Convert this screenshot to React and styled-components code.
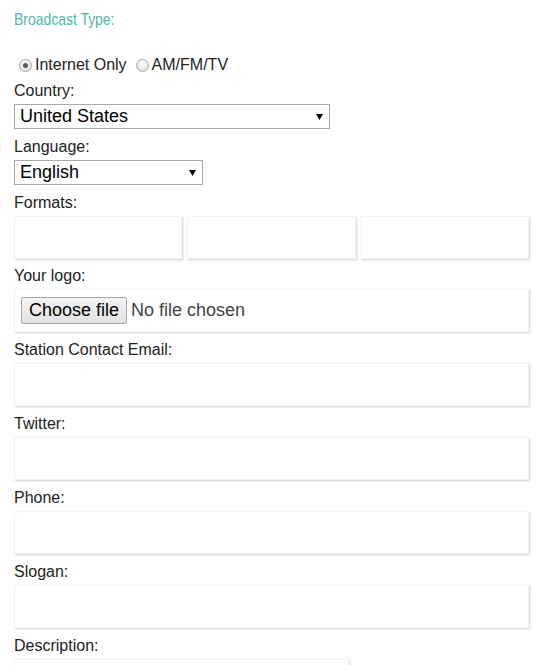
import React from "react";
import styled, { createGlobalStyle, css } from "styled-components";

const GlobalStyle = createGlobalStyle`
  html, body {
    overflow: hidden;
  }
  body {
    margin: 0;
    background: #fff;
    color: #222;
    font-family: "Liberation Sans", Arial, sans-serif;
  }
`;

const card = css`
  box-sizing: border-box;
  background: #fff;
  border: 1px solid #f3f3f3;
  box-shadow: 1px 1px 2px rgba(0, 0, 0, 0.18);
`;

const S = {
  Form: styled.form`
    width: 515px;
    padding: 10px 0 0 14px;
  `,
  // narrow face isn't installed, so squeeze the regular one
  Heading: styled.div`
    font-family: "Liberation Sans", Arial, sans-serif;
    font-size: 17px;
    line-height: 20px;
    height: 20px;
    color: #4db8ad;
    margin-bottom: 26px;
    transform: scaleX(0.82);
    transform-origin: left center;
  `,
  RadioRow: styled.div`
    display: flex;
    align-items: center;
    height: 18px;
    font-size: 16px;
    line-height: 18px;
    margin-bottom: 8px;
  `,
  RadioLabel: styled.label`
    display: flex;
    align-items: center;
    margin-right: 4px;
  `,
  Radio: styled.span`
    box-sizing: border-box;
    width: 13px;
    height: 13px;
    margin: 0 3px 0 5px;
    border-radius: 50%;
    border: 1px solid #a8a8a8;
    background: radial-gradient(circle at 50% 35%, #fdfdfd, #d9d9d9);
    display: flex;
    align-items: center;
    justify-content: center;
    &::after {
      content: "";
      width: 5px;
      height: 5px;
      border-radius: 50%;
      background: ${(p) => (p.$checked ? "#5a5a5a" : "transparent")};
    }
  `,
  Label: styled.div`
    font-size: 16px;
    line-height: 18px;
    margin-bottom: 4px;
  `,
  SelectBox: styled.div`
    box-sizing: border-box;
    width: ${(p) => p.$width}px;
    height: 25px;
    margin-bottom: 9px;
    border: 1px solid #a9a9a9;
    background: #fff;
    display: flex;
    align-items: center;
    justify-content: space-between;
    padding: 0 6px 0 5px;
    font-size: 18px;
    color: #000;
  `,
  FormatsRow: styled.div`
    display: grid;
    grid-template-columns: repeat(3, 1fr);
    gap: 5px;
    margin-bottom: 8px;
  `,
  Box: styled.div`
    ${card}
    height: 43px;
  `,
  FileBox: styled.div`
    ${card}
    height: 43px;
    margin-bottom: 9px;
    display: flex;
    align-items: center;
    padding-left: 6px;
    font-size: 18px;
  `,
  FileButton: styled.button`
    height: 27px;
    padding: 0 7px;
    font-family: "Liberation Sans", Arial, sans-serif;
    font-size: 18px;
    color: #000;
    border: 1px solid #a6a6a6;
    border-radius: 2px;
    background: linear-gradient(#f4f4f4, #e2e2e2);
    margin-right: 4px;
  `,
  FileText: styled.span`
    color: #444;
  `,
  Input: styled.input`
    ${card}
    display: block;
    width: 100%;
    height: 43px;
    margin: 0 0 9px;
    outline: none;
  `,
  TextArea: styled.textarea`
    ${card}
    display: block;
    width: 335px;
    height: 100px;
    resize: none;
    outline: none;
  `,
};

const Arrow = () => (
  <svg width="7" height="6" viewBox="0 0 7 6">
    <path d="M0 0H7L3.5 6Z" fill="#000" />
  </svg>
);

const Select = ({ width, value }) => (
  <S.SelectBox $width={width}>
    <span>{value}</span>
    <Arrow />
  </S.SelectBox>
);

const fields = ["Station Contact Email:", "Twitter:", "Phone:", "Slogan:"];

export default function App() {
  return (
    <>
      <GlobalStyle />
      <S.Form>
        <S.Heading>Broadcast Type:</S.Heading>
        <S.RadioRow>
          <S.RadioLabel>
            <S.Radio $checked />
            Internet Only
          </S.RadioLabel>
          <S.RadioLabel>
            <S.Radio />
            AM/FM/TV
          </S.RadioLabel>
        </S.RadioRow>

        <S.Label>Country:</S.Label>
        <Select width={316} value="United States" />

        <S.Label>Language:</S.Label>
        <Select width={189} value="English" />

        <S.Label>Formats:</S.Label>
        <S.FormatsRow>
          <S.Box />
          <S.Box />
          <S.Box />
        </S.FormatsRow>

        <S.Label>Your logo:</S.Label>
        <S.FileBox>
          <S.FileButton type="button">Choose file</S.FileButton>
          <S.FileText>No file chosen</S.FileText>
        </S.FileBox>

        {fields.map((f) => (
          <React.Fragment key={f}>
            <S.Label>{f}</S.Label>
            <S.Input type="text" />
          </React.Fragment>
        ))}

        <S.Label>Description:</S.Label>
        <S.TextArea />
      </S.Form>
    </>
  );
}
